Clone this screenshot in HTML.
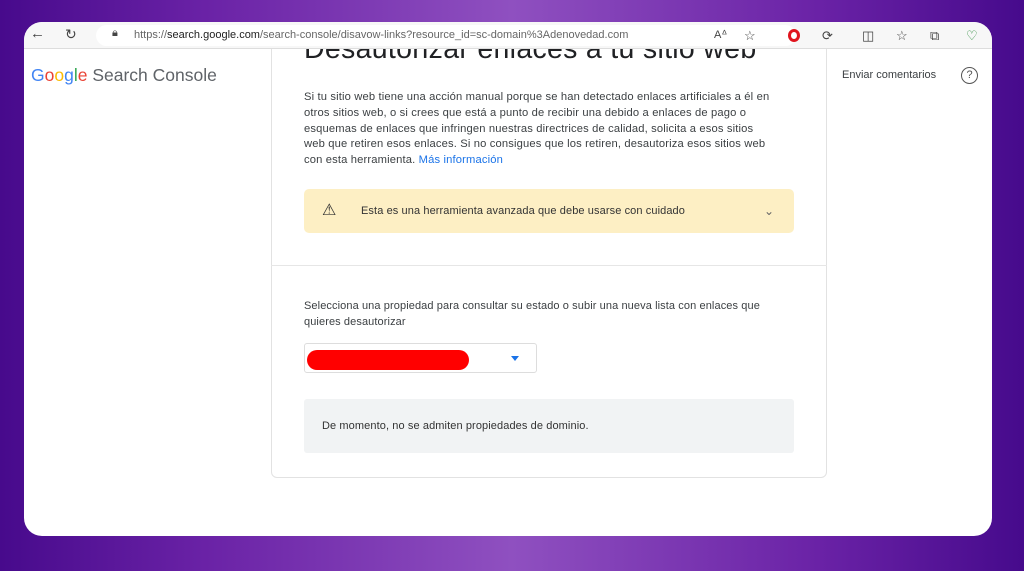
<!DOCTYPE html>
<html><head><meta charset="utf-8"><style>
*{margin:0;padding:0;box-sizing:border-box}
body{width:1024px;height:571px;overflow:hidden;font-family:"Liberation Sans",sans-serif;background:linear-gradient(90deg,#470a8c 0%,#6a22a6 20%,#8f50c0 50%,#6a22a6 80%,#460a8c 100%);position:relative}
.win{position:absolute;left:24px;top:22px;width:968px;height:514px;background:#fff;border-radius:18px;overflow:hidden}
.bar{position:absolute;left:0;top:0;width:968px;height:27px;background:#f7f7f7;border-bottom:1px solid #ddd;z-index:2}
.url{position:absolute;left:72px;top:3px;width:700px;height:21px;background:#fff;border-radius:11px;font-size:11px;color:#666;line-height:21px;padding-left:38px}
.url b{color:#222;font-weight:normal}
.ic{position:absolute;top:6px;font-size:13px;color:#444}
.content{position:absolute;left:0;top:27px;width:968px;height:487px}
.logo{position:absolute;left:7px;top:16px;font-size:17.5px;color:#5f6368}
.card{position:absolute;left:247px;top:-40px;width:556px;height:469px;border:1px solid #e2e2e2;border-radius:6px}
h1{position:absolute;left:280px;top:-16px;font-size:28.5px;font-weight:normal;color:#202124;letter-spacing:.3px}
p.t{position:absolute;left:280px;top:41px;width:472px;font-size:11.2px;line-height:15.8px;color:#3c4043;letter-spacing:.15px}
.warn{position:absolute;left:280px;top:140px;width:490px;height:44px;background:#fdefc4;border-radius:5px;font-size:11px;color:#333;line-height:44px;padding-left:57px;letter-spacing:.1px}
.sep{position:absolute;left:247px;top:216px;width:556px;height:1px;background:#e6e6e6}
.sel{position:absolute;left:280px;top:294px;width:233px;height:30px;border:1px solid #ddd;border-radius:3px}
.red{position:absolute;left:2px;top:6px;width:162px;height:20px;background:#f00;border-radius:10px}
.grey{position:absolute;left:280px;top:350px;width:490px;height:54px;background:#f1f3f4;border-radius:3px;font-size:11px;color:#333;line-height:54px;padding-left:18px;letter-spacing:.1px}
</style></head><body>
<div class="win">
 <div class="bar">
  <span class="ic" style="left:6px;font-size:15px;top:3px">←</span>
  <span class="ic" style="left:41px;font-size:14px;top:4px">↻</span>
  <div class="url">https://<b>search.google.com</b>/search-console/disavow-links?resource_id=sc-domain%3Adenovedad.com</div>
  <span class="ic" style="left:88px;top:5px;font-size:11px">🔒︎</span>
  <span class="ic" style="left:690px;font-size:11px">Aᐞ</span>
  <span class="ic" style="left:720px">☆</span>
  <span style="position:absolute;left:764px;top:7px;width:12px;height:13px;border-radius:50%;border:3px solid #e0141e"></span>
  <span class="ic" style="left:798px">⟳</span>
  <span class="ic" style="left:838px">◫</span>
  <span class="ic" style="left:872px">☆</span>
  <span class="ic" style="left:906px">⧉</span>
  <span class="ic" style="left:942px;color:#2a8a3a">♡</span>
 </div>
 <div class="content">
  <div class="logo"><span style="color:#4285f4">G</span><span style="color:#ea4335">o</span><span style="color:#fbbc05">o</span><span style="color:#4285f4">g</span><span style="color:#34a853">l</span><span style="color:#ea4335">e</span> Search Console</div>
  <div class="card"></div>
  <h1>Desautorizar enlaces a tu sitio web</h1>
  <p class="t">Si tu sitio web tiene una acción manual porque se han detectado enlaces artificiales a él en otros sitios web, o si crees que está a punto de recibir una debido a enlaces de pago o esquemas de enlaces que infringen nuestras directrices de calidad, solicita a esos sitios web que retiren esos enlaces. Si no consigues que los retiren, desautoriza esos sitios web con esta herramienta. <span style="color:#1a73e8">Más información</span></p>
  <div class="warn">Esta es una herramienta avanzada que debe usarse con cuidado
   <span style="position:absolute;left:18px;top:0;font-size:16px;color:#333">⚠</span>
   <span style="position:absolute;left:460px;top:0;color:#666;font-size:12px">⌄</span></div>
  <div class="sep"></div>
  <div style="position:absolute;left:280px;top:249px;width:480px;font-size:11px;line-height:16px;color:#3c4043;letter-spacing:.1px">Selecciona una propiedad para consultar su estado o subir una nueva lista con enlaces que quieres desautorizar</div>
  <div class="sel"><div class="red"></div><span style="position:absolute;left:206px;top:12px;border:4px solid transparent;border-top:5px solid #1a73e8"></span></div>
  <div class="grey">De momento, no se admiten propiedades de dominio.</div>
  <div style="position:absolute;left:818px;top:20px;font-size:11px;color:#3c4043">Enviar comentarios</div>
  <div style="position:absolute;left:937px;top:18px;width:17px;height:17px;border:1.5px solid #555;border-radius:50%;font-size:11px;text-align:center;line-height:14px;color:#555">?</div>
 </div>
</div>
</body></html>
